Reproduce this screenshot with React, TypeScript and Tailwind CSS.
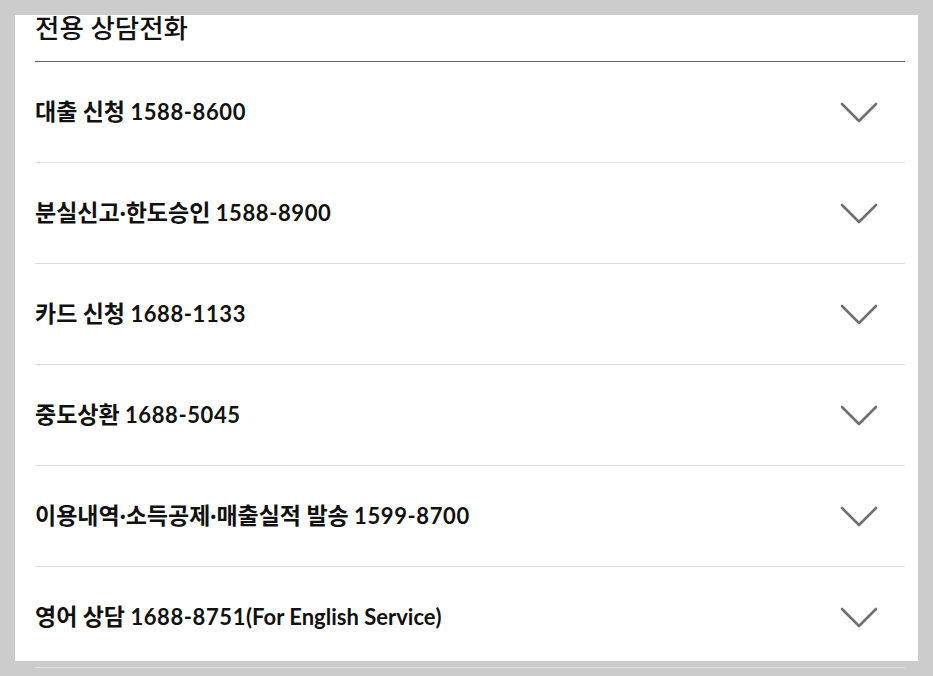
import React from "react";

const items = [
  "대출 신청 1588-8600",
  "분실신고·한도승인 1588-8900",
  "카드 신청 1688-1133",
  "중도상환 1688-5045",
  "이용내역·소득공제·매출실적 발송 1599-8700",
  "영어 상담 1688-8751(For English Service)",
];

function Label({ text }: { text: string }) {
  const parts: { t: string; k: "h" | "d" | "o" }[] = [];
  const re = /([\uAC00-\uD7A3]+)|([0-9\-]+)|([^\uAC00-\uD7A30-9\-]+)/g;
  let m: RegExpExecArray | null;
  while ((m = re.exec(text))) {
    if (m[1]) parts.push({ t: m[1], k: "h" });
    else if (m[2]) parts.push({ t: m[2], k: "d" });
    else parts.push({ t: m[3], k: "o" });
  }
  return (
    <span className="font-bold text-[#111111] leading-[30px] whitespace-nowrap">
      {parts.map((p, i) =>
        p.k === "h" ? (
          <span key={i} className="text-[23px]">{p.t}</span>
        ) : p.k === "d" ? (
          <span key={i} className="text-[22px] tracking-[0.6px]">{p.t}</span>
        ) : (
          <span key={i} className="text-[22px]">{p.t}</span>
        )
      )}
    </span>
  );
}

function Chevron() {
  return (
    <svg width="40" height="24" viewBox="0 0 40 24" fill="none" className="shrink-0">
      <path d="M3 4 L20 21 L37 4" stroke="#707070" strokeWidth="2.6" strokeLinecap="round" strokeLinejoin="round" />
    </svg>
  );
}

export default function App() {
  return (
    <div
      className="w-[933px] h-[676px] bg-[#cccccc] pt-[15px] pl-[15px] overflow-hidden"
      style={{ fontFamily: 'Lato, "Noto Sans CJK KR", sans-serif' }}
    >
      <div className="w-[903px] h-[646px] bg-white pl-5 pr-[13px]">
        <div className="h-[47px] border-b border-[#666666]">
          <h2 className="text-[26.5px] leading-[26px] font-medium text-[#111111]">전용 상담전화</h2>
        </div>
        {items.map((t) => (
          <div key={t} className="h-[101px] border-b border-[#dddddd] flex items-center justify-between pr-[26px]">
            <Label text={t} />
            <Chevron />
          </div>
        ))}
      </div>
    </div>
  );
}
